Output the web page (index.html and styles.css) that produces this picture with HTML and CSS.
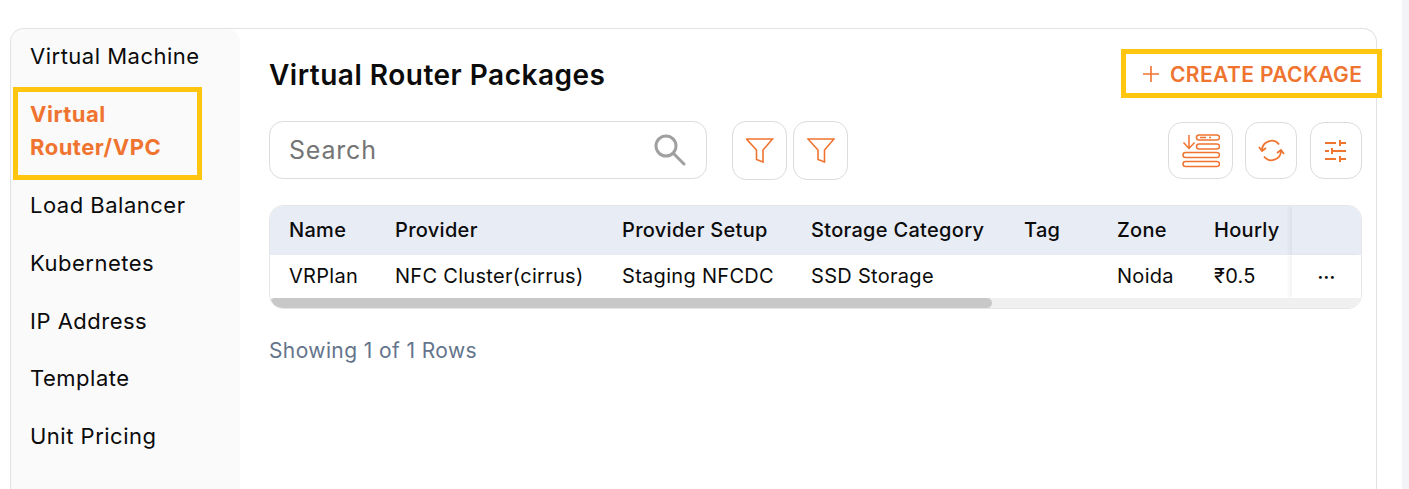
FILE: index.html
```html
<!DOCTYPE html>
<html>
<head>
    <title>Virtual Router Packages</title>
    <link rel="stylesheet" href="styles.css">
</head>
<body>
    <div class="page">
        <div class="card">
            <aside class="sidebar">
                <a class="side-item">Virtual Machine</a>
                <a class="side-item active">Virtual Router/VPC</a>
                <a class="side-item">Load Balancer</a>
                <a class="side-item">Kubernetes</a>
                <a class="side-item">IP Address</a>
                <a class="side-item">Template</a>
                <a class="side-item">Unit Pricing</a>
            </aside>
            <main class="main">
                <div class="title-row">
                    <h1>Virtual Router Packages</h1>
                    <button class="create">
                        <svg width="18" height="18" viewBox="0 0 18 18"><path d="M9 1V17M1 9H17" fill="none" stroke="#ef7430" stroke-width="1.6"/></svg>
                        <span>CREATE PACKAGE</span>
                    </button>
                </div>
                <div class="toolbar">
                    <div class="search">
                        <span>Search</span>
                        <svg width="34" height="34" viewBox="0 0 34 34"><circle cx="13" cy="13" r="10" fill="none" stroke="#a0a0a0" stroke-width="3"/><path d="M21 21L31 31" stroke="#a0a0a0" stroke-width="3" stroke-linecap="round"/></svg>
                    </div>
                    <button class="icon-btn filter first">
                        <svg width="28" height="25" viewBox="0 0 28 25"><path d="M0.500 1H26.500L17 12V24L10.500 21.500V12Z" fill="none" stroke="#ef7430" stroke-width="1.600"/></svg>
                    </button>
                    <button class="icon-btn filter">
                        <svg width="28" height="25" viewBox="0 0 28 25"><path d="M1 1H27L17.500 12V24L11 21.500V12Z" fill="none" stroke="#ef7430" stroke-width="1.600"/></svg>
                    </button>
                    <div class="spacer"></div>
                    <button class="icon-btn columns">
                        <svg width="38" height="34" viewBox="0 0 38 34" fill="none" stroke="#ef7430" stroke-width="1.500">
                            <rect x="14.500" y="1" width="23" height="5" rx="2.500"/>
                            <rect x="14.500" y="10" width="23" height="5" rx="2.500"/>
                            <rect x="1" y="18.500" width="36.500" height="5" rx="2.500"/>
                            <rect x="1" y="27.500" width="36.500" height="5" rx="2.500"/>
                            <path d="M7 1V14M1.500 8.500L7 14.500L12.500 8.500"/>
                            <path d="M18 3.500H24M27 3.500H29"/>
                        </svg>
                    </button>
                    <button class="icon-btn sync">
                        <svg width="27" height="23" viewBox="0 0 27 23" fill="none" stroke="#ef7430" stroke-width="1.800">
                            <path d="M4 11A9.500 9.500 0 0 1 21 5.500"/>
                            <path d="M23 12A9.500 9.500 0 0 1 6 17.500"/>
                            <path d="M1 8L4 12L8 9"/>
                            <path d="M26 15L23 11L19 14"/>
                        </svg>
                    </button>
                    <button class="icon-btn sliders">
                        <svg width="22" height="22" viewBox="0 0 22 22" fill="none" stroke="#ef7430" stroke-width="2">
                            <path d="M0 3H11M15 0V6M15 3H21"/>
                            <path d="M0 11H4M7 8V14M7 11H21"/>
                            <path d="M0 19H11M15 16V22M15 19H21"/>
                        </svg>
                    </button>
                </div>
                <div class="table-wrap">
                    <table>
                        <thead>
                            <tr>
                                <th class="c-name">Name</th>
                                <th class="c-provider">Provider</th>
                                <th class="c-setup">Provider Setup</th>
                                <th class="c-storage">Storage Category</th>
                                <th class="c-tag">Tag</th>
                                <th class="c-zone">Zone</th>
                                <th class="c-hourly">Hourly</th>
                                <th class="c-action"></th>
                            </tr>
                        </thead>
                        <tbody>
                            <tr>
                                <td>VRPlan</td>
                                <td>NFC Cluster(cirrus)</td>
                                <td>Staging NFCDC</td>
                                <td>SSD Storage</td>
                                <td></td>
                                <td>Noida</td>
                                <td>₹0.5</td>
                                <td class="c-action dots">···</td>
                            </tr>
                        </tbody>
                    </table>
                    <div class="scrollbar"><div class="thumb"></div></div>
                </div>
                <p class="rows">Showing 1 of 1 Rows</p>
            </main>
        </div>
    </div>
</body>
</html>
```
FILE: styles.css
```css
html, body {
    margin: 0;
    padding: 0;
    height: 489px;
    overflow: hidden;
    background-color: #fff;
}
body {
    font-family: Inter, "Noto Sans", sans-serif;
    color: #0b0b0b;
}
.page {
    width: 1409px;
    height: 489px;
    box-sizing: border-box;
    padding: 28px 0 0 10px;
    border-right: 7px solid #f3f4f7;
}
.card {
    display: flex;
    width: 1367px;
    height: 461px;
    box-sizing: border-box;
    border: 1px solid #e2e2e2;
    border-bottom: none;
    border-radius: 14px 14px 0 0;
}
.sidebar {
    width: 229px;
    flex: none;
    background-color: #fafafa;
    border-radius: 14px 14px 0 0;
    padding-top: 12px;
    box-sizing: border-box;
}
.side-item {
    display: block;
    font-size: 22px;
    letter-spacing: 0.5px;
    line-height: 30px;
    padding-left: 19px;
    margin-bottom: 27.75px;
}
.side-item.active {
    width: 189px;
    height: 93px;
    box-sizing: border-box;
    border: 5px solid #ffc50f;
    margin: -11.75px 0 10px 2px;
    padding: 6px 20px 0 12px;
    color: #ef7430;
    font-weight: 700;
    line-height: 33px;
}
.main {
    flex: 1;
    padding: 20px 14px 0 29px;
    min-width: 0;
}
.title-row {
    display: flex;
    justify-content: space-between;
    align-items: center;
    height: 49px;
}
h1 {
    margin: 3px 0 0;
    font-size: 28px;
    letter-spacing: 0.5px;
    font-weight: 600;
}
.create {
    width: 261px;
    height: 49px;
    margin-right: -20px;
    border: 5px solid #ffc50f;
    background: #fff;
    color: #ef7430;
    font: 600 21px Inter, sans-serif;
    letter-spacing: 0.4px;
    display: flex;
    align-items: center;
    gap: 9px;
    padding: 0 0 0 16px;
    white-space: nowrap;
}
.create span {
    padding: 2px 0 0 1px;
}
.toolbar {
    display: flex;
    align-items: flex-start;
    margin-top: 23px;
    height: 59px;
}
.search {
    width: 438px;
    height: 58px;
    box-sizing: border-box;
    border: 1px solid #dcdcdc;
    border-radius: 14px;
    display: flex;
    justify-content: space-between;
    align-items: center;
    padding: 0 19px;
    font-size: 25px;
    letter-spacing: 0.8px;
    color: #757575;
}
.icon-btn {
    background: #fff;
    border: 1px solid #dcdcdc;
    border-radius: 14px;
    padding: 0;
    display: flex;
    align-items: center;
    justify-content: center;
    box-sizing: border-box;
    height: 57px;
    margin-top: 1px;
}
.filter {
    width: 55px;
    height: 59px;
    margin-top: 0;
    margin-right: 6px;
}
.filter.first {
    margin-left: 25px;
}
.spacer {
    flex: 1;
}
.columns {
    width: 65px;
}
.sync {
    width: 52px;
    margin-left: 12px;
}
.sliders {
    width: 52px;
    margin-left: 13px;
}
.table-wrap {
    margin-top: 25px;
    width: 1093px;
    height: 104px;
    border: 1px solid #e6e6e6;
    border-radius: 14px;
    box-sizing: border-box;
    overflow: hidden;
}
table {
    border-collapse: collapse;
    table-layout: fixed;
    width: 1091px;
}
th, td {
    padding: 0 0 2px 19px;
    text-align: left;
    font-size: 20px;
    letter-spacing: 0.3px;
    white-space: nowrap;
    box-sizing: border-box;
}
th {
    height: 49px;
    background-color: #e8ecf5;
    font-weight: 500;
}
td {
    height: 43px;
    background-color: #fff;
    font-weight: 400;
}
.c-name { width: 125px; }
.c-provider { width: 227px; padding-left: 0; }
.c-setup { width: 189px; padding-left: 0; }
.c-storage { width: 213px; padding-left: 0; }
.c-tag { width: 93px; padding-left: 0; }
.c-zone { width: 97px; padding-left: 0; }
.c-hourly { width: 78px; padding-left: 0; }
td:nth-child(n+2) { padding-left: 0; }
.c-action {
    box-shadow: -3px 0 4px rgba(0,0,0,0.05);
    width: 69px;
    padding: 0;
    text-align: center;
}
.dots {
    font-weight: 700;
    font-size: 17px;
}
.scrollbar {
    height: 10px;
    background-color: #f0f0f0;
}
.thumb {
    width: 722px;
    height: 10px;
    background-color: #c8c8c8;
    border-radius: 5px;
}
.rows {
    margin: 29px 0 0;
    font-size: 21px;
    letter-spacing: 0.4px;
    color: #64748b;
}
```
